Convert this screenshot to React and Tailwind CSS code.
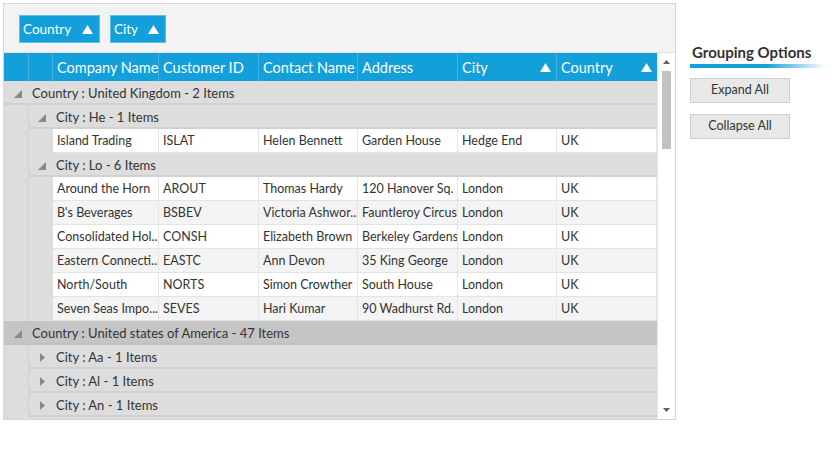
import React from "react";

const FONT = { fontFamily: 'Lato, "Open Sans", sans-serif' };

const cols = [
  { name: "Company Name", w: "w-[106px]" },
  { name: "Customer ID", w: "w-[100px]" },
  { name: "Contact Name", w: "w-[99px]" },
  { name: "Address", w: "w-[100px]" },
  { name: "City", w: "w-[99px]", sort: true },
  { name: "Country", w: "w-[100px]", sort: true },
];

const ExpTri = () => (
  <svg width="8" height="8" viewBox="0 0 8 8" className="shrink-0">
    <polygon points="8,0 8,8 0,8" fill="#888888" />
  </svg>
);
const ColTri = () => (
  <svg width="5" height="9" viewBox="0 0 5 9" className="shrink-0">
    <polygon points="0,0 5,4.5 0,9" fill="#888888" />
  </svg>
);
const UpTri = ({ w = 11, h = 9 }) => (
  <svg width={w} height={h} viewBox="0 0 11 9" className="shrink-0">
    <polygon points="5.5,0 11,9 0,9" fill="#ffffff" />
  </svg>
);

const dataLon = [
  ["Around the Horn", "AROUT", "Thomas Hardy", "120 Hanover Sq.", "London", "UK"],
  ["B's Beverages", "BSBEV", "Victoria Ashwor...", "Fauntleroy Circus", "London", "UK"],
  ["Consolidated Hol...", "CONSH", "Elizabeth Brown", "Berkeley Gardens", "London", "UK"],
  ["Eastern Connecti...", "EASTC", "Ann Devon", "35 King George", "London", "UK"],
  ["North/South", "NORTS", "Simon Crowther", "South House", "London", "UK"],
  ["Seven Seas Impo...", "SEVES", "Hari Kumar", "90 Wadhurst Rd.", "London", "UK"],
];

function DataRow({ cells, alt }) {
  return (
    <div className="flex h-[24px]">
      <div className="w-[49px] shrink-0 bg-[#dedddd] flex">
        <div className="w-[24px] border-r border-[#d0d0d0]" />
        <div className="w-[25px]" />
      </div>
      <div className={`flex border-b border-[#e4e4e4] ${alt ? "bg-[#f4f4f4]" : "bg-white"}`}>
        {cells.map((c, i) => (
          <div
            key={i}
            className={`${cols[i].w} shrink-0 border-r border-[#e6e6e6] pl-[4px] pt-[2px] flex items-center text-[12.5px] text-[#333] whitespace-nowrap overflow-hidden`}
          >
            {c}
          </div>
        ))}
      </div>
    </div>
  );
}

function CityRow({ label, expanded }) {
  return (
    <div className="flex h-[24px]">
      <div className="w-[25px] shrink-0 bg-[#dedddd] border-r border-[#d0d0d0]" />
      <div className="flex-1 flex items-center bg-[#dedddd] border-b-2 border-[#d2d1d1] pt-[3px]">
        <div className="w-[24px] flex items-center justify-center pl-[2px]">
          {expanded ? <ExpTri /> : <ColTri />}
        </div>
        <span className="pl-[3px] text-[13px] text-[#333]">{label}</span>
      </div>
    </div>
  );
}

function CountryRow({ label, dark }) {
  return (
    <div
      className={`flex h-[24px] items-center border-b-2 pt-[3px] ${
        dark ? "bg-[#c5c5c5] border-[#c0c0c0]" : "bg-[#dedddd] border-[#d2d1d1]"
      }`}
    >
      <div className="w-[25px] flex items-center justify-center pl-[2px]">
        <ExpTri />
      </div>
      <span className="pl-[3px] text-[13px] text-[#333]">{label}</span>
    </div>
  );
}

export default function App() {
  return (
    <div className="w-[840px] h-[450px] bg-white relative" style={FONT}>
      <div className="flex pt-[3px] pl-[3px]">
        <div className="w-[673px] h-[417px] border border-[#d6d6d6] flex flex-col shrink-0">
          {/* group drop area */}
          <div className="h-[49px] bg-[#f3f3f3] flex items-start gap-[10px] pl-[15px] pt-[11px] border-b border-[#e0e0e0]">
            <div className="h-[28px] w-[81px] bg-[#129fda] border border-[#5cbfe8] flex items-center justify-between pl-[3px] pr-[6px]">
              <span className="text-white text-[13.5px]">Country</span>
              <UpTri />
            </div>
            <div className="h-[28px] w-[56px] bg-[#129fda] border border-[#5cbfe8] flex items-center justify-between pl-[3px] pr-[6px]">
              <span className="text-white text-[13.5px]">City</span>
              <UpTri />
            </div>
          </div>
          <div className="flex flex-1 min-h-0">
            <div className="w-[653px] flex flex-col overflow-hidden">
              {/* header */}
              <div className="flex h-[28px] bg-[#129fda]">
                <div className="w-[25px] shrink-0 border-r border-[#3fb1e2]" />
                <div className="w-[24px] shrink-0 border-r border-[#3fb1e2]" />
                {cols.map((c, i) => (
                  <div
                    key={i}
                    className={`${c.w} shrink-0 ${i < 5 ? "border-r border-[#3fb1e2]" : ""} pl-[4px] pr-[5px] pt-[1px] flex items-center justify-between text-white text-[14.5px] whitespace-nowrap`}
                  >
                    <span>{c.name}</span>
                    {c.sort && <UpTri />}
                  </div>
                ))}
              </div>
              <div className="bg-[#dedddd] flex-1">
                <CountryRow label="Country : United Kingdom - 2 Items" />
                <CityRow label="City : He - 1 Items" expanded />
                <DataRow cells={["Island Trading", "ISLAT", "Helen Bennett", "Garden House", "Hedge End", "UK"]} />
                <CityRow label="City : Lo - 6 Items" expanded />
                {dataLon.map((r, i) => (
                  <DataRow key={i} cells={r} alt={i % 2 === 1} />
                ))}
                <CountryRow label="Country : United states of America - 47 Items" dark />
                <CityRow label="City : Aa - 1 Items" />
                <CityRow label="City : Al - 1 Items" />
                <CityRow label="City : An - 1 Items" />
              </div>
            </div>
            {/* scrollbar */}
            <div className="w-[18px] bg-white border-l border-[#e8e8e8] flex flex-col items-center relative">
              <div className="h-[18px] flex items-center justify-center">
                <svg width="7" height="4" viewBox="0 0 7 4">
                  <polygon points="3.5,0 7,4 0,4" fill="#606060" />
                </svg>
              </div>
              <div className="w-[9px] h-[78px] bg-[#c2c2c2]" />
              <div className="flex-1" />
              <div className="h-[18px] flex items-center justify-center">
                <svg width="7" height="4" viewBox="0 0 7 4">
                  <polygon points="0,0 7,0 3.5,4" fill="#606060" />
                </svg>
              </div>
            </div>
          </div>
        </div>
        {/* right panel */}
        <div className="ml-[14px] pt-[40px] flex flex-col">
          <div className="pl-[2px] text-[15px] font-bold text-[#333] leading-[18px]">Grouping Options</div>
          <div className="mt-[3px] h-[4px] w-[136px] bg-[linear-gradient(to_right,#129fda_0%,#129fda_55%,rgba(18,159,218,0)_100%)]" />
          <button className="mt-[10px] w-[100px] h-[25px] bg-[#e8e8e8] border border-[#cfcfcf] text-[12.5px] text-[#333]">
            Expand All
          </button>
          <button className="mt-[11px] w-[100px] h-[25px] bg-[#e8e8e8] border border-[#cfcfcf] text-[12.5px] text-[#333]">
            Collapse All
          </button>
        </div>
      </div>
    </div>
  );
}
